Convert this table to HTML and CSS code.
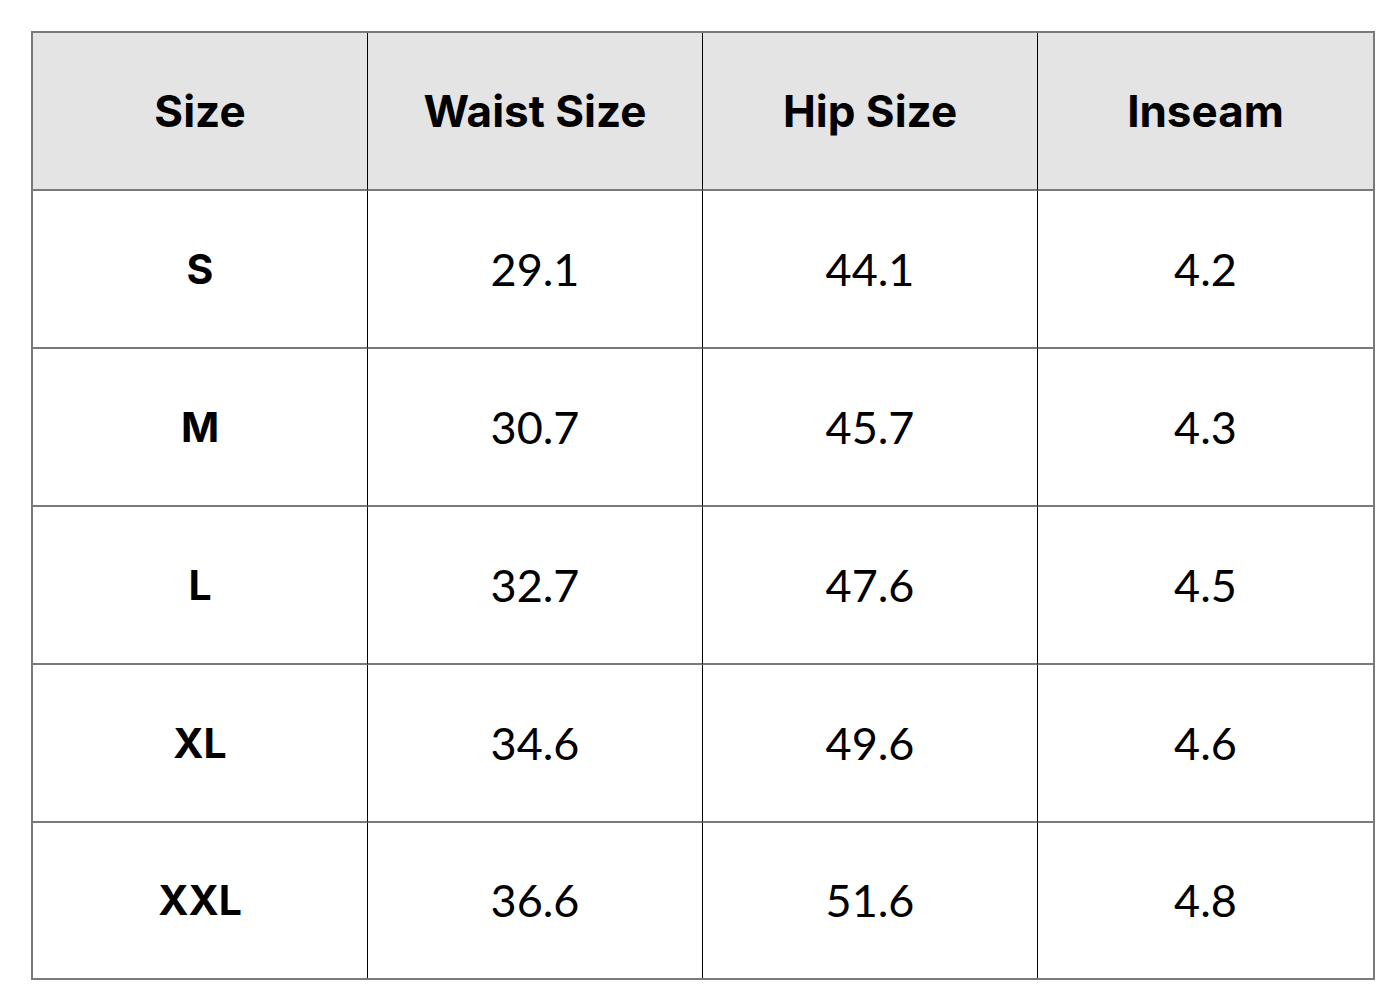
FILE: index.html
```html
<!DOCTYPE html>
<html lang="en">
<head>
<meta charset="utf-8">
<title>Size Chart</title>
<link rel="stylesheet" href="styles.css">
</head>
<body>
<div class="page">
  <table class="chart">
    <thead>
      <tr><th>Size</th><th>Waist Size</th><th>Hip Size</th><th>Inseam</th></tr>
    </thead>
    <tbody>
      <tr><td class="size">S</td><td>29.1</td><td>44.1</td><td>4.2</td></tr>
      <tr><td class="size">M</td><td>30.7</td><td>45.7</td><td>4.3</td></tr>
      <tr><td class="size">L</td><td>32.7</td><td>47.6</td><td>4.5</td></tr>
      <tr><td class="size">XL</td><td>34.6</td><td>49.6</td><td>4.6</td></tr>
      <tr><td class="size">XXL</td><td>36.6</td><td>51.6</td><td>4.8</td></tr>
    </tbody>
  </table>
</div>
</body>
</html>
```

FILE: styles.css
```css
html, body {
  margin: 0;
  padding: 0;
  background: #ffffff;
}
.page {
  padding: 31px 0 0 31px;
}
.chart {
  width: 1344px;
  border: 2px solid #7a7a7a;
  border-collapse: separate;
  border-spacing: 0;
  table-layout: fixed;
  color: #000;
}
.chart th,
.chart td {
  height: 156px;
  box-sizing: content-box;
  text-align: center;
  vertical-align: middle;
  padding: 0;
  line-height: 1;
  border-right: 1px solid #000;
  border-bottom: 2px solid #7a7a7a;
}
.chart th:last-child,
.chart td:last-child {
  border-right: none;
}
.chart tbody tr:last-child td {
  border-bottom: none;
  height: 155px;
}
.chart th {
  background: #e4e4e4;
  font-family: Inter, "Liberation Sans", sans-serif;
  font-weight: 700;
  font-size: 44px;
}
.chart td {
  font-family: Lato, "Liberation Sans", sans-serif;
  font-weight: 400;
  font-size: 45px;
}
.chart td.size {
  font-family: Inter, "Liberation Sans", sans-serif;
  font-weight: 700;
  font-size: 41px;
}
```
